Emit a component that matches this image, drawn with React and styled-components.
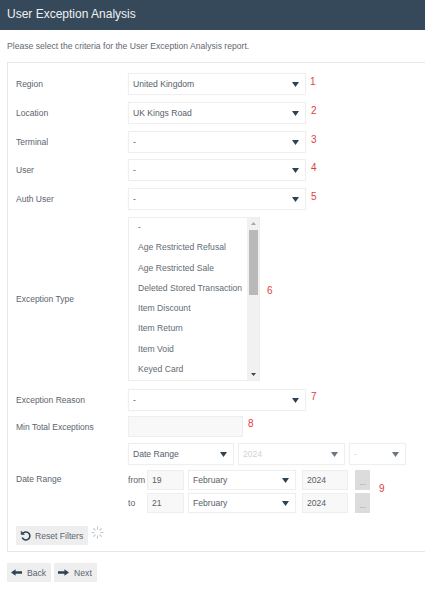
import React from "react";
import styled, { createGlobalStyle } from "styled-components";

const Global = createGlobalStyle`
  html, body { margin: 0; padding: 0; background: #fff; overflow: hidden; }
  body { font-family: "Liberation Sans", Arial, sans-serif; color: #4f5a65; }
`;
const Page = styled.div`width: 425px; height: 592px; overflow: hidden; display: flex; flex-direction: column;`;
const Header = styled.header`
  height: 30px; background: #36495a; color: #eef1f3; font-size: 12px;
  display: flex; align-items: center; padding: 0 7px 2px; box-sizing: border-box; flex: none;
`;
const Intro = styled.p`margin: 11px 0 0 7px; font-size: 8.6px; line-height: 11px; color: #5f6871;`;
const Panel = styled.section`
  margin: 10px -2px 0 7px; height: 490px; box-sizing: border-box; flex: none;
  border: 1px solid #e6e6e6; padding: 10px 0 0 8px; display: flex; flex-direction: column;
`;
const Row = styled.div`
  display: grid; grid-template-columns: 112px auto 1fr; align-items: center;
  margin-bottom: ${p => p.$gap ?? 7}px;
`;
const Label = styled.label`font-size: 8.5px; color: #5a646e; padding-top: ${p => p.$down ?? 0}px;`;
const Num = styled.span`
  color: #e23c3c; font-size: 10px; margin: 0 0 ${p => p.$up ?? 5}px ${p => p.$left ?? 5}px;
`;
const SelectBox = styled.div`
  width: ${p => p.$w}px; height: ${p => p.$h ?? 22}px; box-sizing: border-box; flex: none;
  border: 1px solid #efefef; box-shadow: 0 0 1px #e4e4e4; background: #fff; border-radius: 1px;
  display: flex; align-items: center; justify-content: space-between; padding: 0 6px 0 4px;
  font-size: 8.6px; color: ${p => p.$off ? "#cfd3d6" : "#55606a"};
`;
const Arrow = styled.svg`width: 7px; height: 5px; flex: none; fill: ${p => p.$off ? "#6a7682" : "#2f4254"};`;
const Select = ({ w, h, off, children }) => (
  <SelectBox $w={w} $h={h} $off={off}>
    <span>{children}</span>
    <Arrow $off={off} viewBox="0 0 7 5"><path d="M0 0h7L3.5 5z" /></Arrow>
  </SelectBox>
);
const ListWrap = styled.div`
  width: 132px; height: 164px; box-sizing: border-box; border: 1px solid #ededed;
  display: flex; background: #fff; overflow: hidden;
`;
const ListItems = styled.ul`
  list-style: none; margin: -1px 0 0; padding: 0 0 0 9px; flex: 1; overflow: hidden;
  font-size: 8.6px; color: #626b74;
`;
const ListItem = styled.li`height: 20.3px; line-height: 20.3px; white-space: nowrap;`;
const Scroll = styled.div`
  width: 12px; background: #f1f1f1; display: flex; flex-direction: column; align-items: center; flex: none;
`;
const ScrollBtn = styled.svg`width: 5px; height: 3px; fill: ${p => p.$dim ? "#a8a8a8" : "#444"}; margin: 4px 0;`;
const Thumb = styled.div`width: 9px; height: 65px; margin-top: 1px; background: #b9b9b9; margin-bottom: auto;`;
const Input = styled.div`
  width: ${p => p.$w}px; height: ${p => p.$h ?? 21}px; box-sizing: border-box; flex: none;
  background: #f8f8f8; border: 1px solid #eeeeee; font-size: 8.6px; color: #55606a;
  display: flex; align-items: center; padding-left: 4px;
`;
const DateStack = styled.div`display: flex; flex-direction: column; gap: 5px;`;
const SelectLine = styled.div`display: flex; align-items: center; gap: 4px;`;
const RangeArea = styled.div`display: flex; align-items: center;`;
const RangeRows = styled.div`display: flex; flex-direction: column; gap: 3px;`;
const RangeLine = styled.div`display: grid; grid-template-columns: 19px 37px 108px 46px 15px; align-items: center; column-gap: 0;`;
const Prefix = styled.span`font-size: 8.6px; color: #5a646e;`;
const DayCell = styled(Input)`width: 37px;`;
const MonthCell = styled.div`margin-left: 4px;`;
const YearCell = styled.div`margin-left: 10px;`;
const Dots = styled.div`
  width: 15px; height: 20px; margin-left: 17px; background: #dcdcdc; font-size: 8px; color: #8a8a8a;
  display: flex; align-items: flex-end; justify-content: center; padding-bottom: 3px; box-sizing: border-box;
`;
const ResetRow = styled.div`display: flex; align-items: flex-start; gap: 3px; margin-top: 6px;`;
const Btn = styled.button`
  height: 19px; padding: 0 5px 0 4px; border: 0; background: #eeeeee; color: #5a646e; margin: 0;
  font: 8.6px "Liberation Sans", Arial, sans-serif; display: flex; align-items: center; gap: ${p => p.$gap ?? 5}px;
`;
const Icon = styled.svg`width: ${p => p.$size ?? 11}px; height: ${p => p.$size ?? 11}px; flex: none;`;
const Spinner = styled.svg`width: 13px; height: 13px; flex: none;`;
const Footer = styled.div`display: flex; gap: 3px; margin: 11px 0 0 7px;`;

const options = ["-", "Age Restricted Refusal", "Age Restricted Sale", "Deleted Stored Transaction", "Item Discount", "Item Return", "Item Void", "Keyed Card"];

const Range = ({ prefix, day }) => (
  <RangeLine>
    <Prefix>{prefix}</Prefix>
    <DayCell $h={20}>{day}</DayCell>
    <MonthCell><Select w={108} h={20}>February</Select></MonthCell>
    <YearCell><Input $w={46} $h={20}>2024</Input></YearCell>
    <Dots>...</Dots>
  </RangeLine>
);

export default function App() {
  return (
    <Page>
      <Global />
      <Header>User Exception Analysis</Header>
      <Intro>Please select the criteria for the User Exception Analysis report.</Intro>
      <Panel>
        <Row><Label>Region</Label><Select w={178}>United Kingdom</Select><Num $left={4}>1</Num></Row>
        <Row><Label>Location</Label><Select w={178}>UK Kings Road</Select><Num>2</Num></Row>
        <Row $gap={6}><Label>Terminal</Label><Select w={178}>-</Select><Num>3</Num></Row>
        <Row><Label>User</Label><Select w={178}>-</Select><Num>4</Num></Row>
        <Row><Label>Auth User</Label><Select w={178}>-</Select><Num>5</Num></Row>
        <Row $gap={8}>
          <Label>Exception Type</Label>
          <ListWrap>
            <ListItems>{options.map(o => <ListItem key={o}>{o}</ListItem>)}</ListItems>
            <Scroll>
              <ScrollBtn $dim viewBox="0 0 5 3"><path d="M0 3h5L2.5 0z" /></ScrollBtn>
              <Thumb />
              <ScrollBtn viewBox="0 0 5 3"><path d="M0 0h5L2.5 3z" /></ScrollBtn>
            </Scroll>
          </ListWrap>
          <Num $left={7} $up={18}>6</Num>
        </Row>
        <Row $gap={5}><Label>Exception Reason</Label><Select w={178}>-</Select><Num $up={7}>7</Num></Row>
        <Row $gap={6}><Label>Min Total Exceptions</Label><Input $w={115} /><Num $up={6}>8</Num></Row>
        <Row>
          <Label $down={2}>Date Range</Label>
          <DateStack>
            <SelectLine>
              <Select w={106}>Date Range</Select>
              <Select w={107} off>2024</Select>
              <Select w={57} off>-</Select>
            </SelectLine>
            <RangeArea>
              <RangeRows>
                <Range prefix="from" day="19" />
                <Range prefix="to" day="21" />
              </RangeRows>
              <Num $left={26} $up={6}>9</Num>
            </RangeArea>
          </DateStack>
        </Row>
        <ResetRow>
          <Btn $gap={3}>
            <Icon $size={12} viewBox="0 0 12 12" fill="none" stroke="#2f4254" strokeWidth="1.6">
              <path d="M3 3.2A4 4 0 1 1 2.2 7.5" />
              <path d="M1.2 1.2v3.2h3.2z" fill="#2f4254" strokeWidth=".6" />
            </Icon>
            Reset Filters
          </Btn>
          <Spinner viewBox="0 0 14 14" stroke="#c4c8cc" strokeWidth="1.2" strokeLinecap="round">
            <path d="M7 1v2.5M7 10.5V13M1 7h2.5M10.5 7H13M2.8 2.8l1.7 1.7M9.5 9.5l1.7 1.7M2.8 11.2l1.7-1.7M9.5 4.5l1.7-1.7" />
          </Spinner>
        </ResetRow>
      </Panel>
      <Footer>
        <Btn>
          <Icon viewBox="0 0 12 11" fill="#2f4254"><path d="M0 5.5 5 2v2.2h7v2.6H5V9z" /></Icon>
          Back
        </Btn>
        <Btn>
          <Icon viewBox="0 0 12 11" fill="#2f4254"><path d="M12 5.5 7 2v2.2H0v2.6h7V9z" /></Icon>
          Next
        </Btn>
      </Footer>
    </Page>
  );
}
